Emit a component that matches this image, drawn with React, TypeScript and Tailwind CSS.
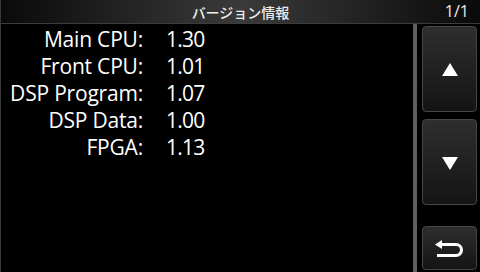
import React from "react";

const rows: [string, string][] = [
  ["Main CPU:", "1.30"],
  ["Front CPU:", "1.01"],
  ["DSP Program:", "1.07"],
  ["DSP Data:", "1.00"],
  ["FPGA:", "1.13"],
];

const btn =
  "flex items-center justify-center rounded-[4px] border border-[#474747] bg-[linear-gradient(to_bottom,#2e2e2e,#141414)]";

export default function App() {
  return (
    <div
      className="w-[480px] h-[272px] bg-black flex flex-col overflow-hidden border-l border-[#3a3a3a]"
      style={{ fontFamily: '"Open Sans", "Noto Sans CJK JP", sans-serif' }}
    >
      <div className="h-[24px] shrink-0 relative flex items-center justify-center border-b border-[#3c3c3c] bg-[linear-gradient(to_right,#0a0a0a,#3a3a3a_50%,#0a0a0a)]">
        <span
          className="text-[14px] leading-none text-[#ececec] font-medium"
          style={{ fontFamily: '"Noto Sans CJK JP", sans-serif' }}
        >
          バージョン情報
        </span>
        <span className="absolute right-[11px] top-[3px] text-[16px] leading-none text-[#ececec]">
          1/1
        </span>
      </div>
      <div className="flex flex-1 min-h-0">
        <div className="w-[412px] pt-[2px]">
          {rows.map(([k, v]) => (
            <div key={k} className="flex h-[27px] items-center text-[21px] leading-none text-white">
              <span className="w-[142px] text-right tracking-[-0.2px]">{k}</span>
              <span className="ml-[23px] tracking-[-0.8px]">{v}</span>
            </div>
          ))}
        </div>
        <div className="w-[4px] bg-[#5c605d]" />
        <div className="ml-[5px] w-[55px] flex flex-col pt-[2px] pb-[2px]">
          <div className={`${btn} h-[86px]`}>
            <svg width="16" height="13" viewBox="0 0 16 13">
              <polygon points="8,0 16,13 0,13" fill="#fff" />
            </svg>
          </div>
          <div className={`${btn} h-[86px] mt-[7px]`}>
            <svg width="16" height="13" viewBox="0 0 16 13" className="mt-[2px]">
              <polygon points="0,0 16,0 8,13" fill="#fff" />
            </svg>
          </div>
          <div className={`${btn} h-[44px] mt-auto`}>
            <svg width="30" height="17" viewBox="0 0 30 17">
              <polygon points="0,4.5 7,0 7,9" fill="#fff" />
              <path d="M6 4.5 H21 A5.5 5.5 0 0 1 21 15.5 H2" stroke="#fff" strokeWidth="3" fill="none" />
            </svg>
          </div>
        </div>
      </div>
    </div>
  );
}
